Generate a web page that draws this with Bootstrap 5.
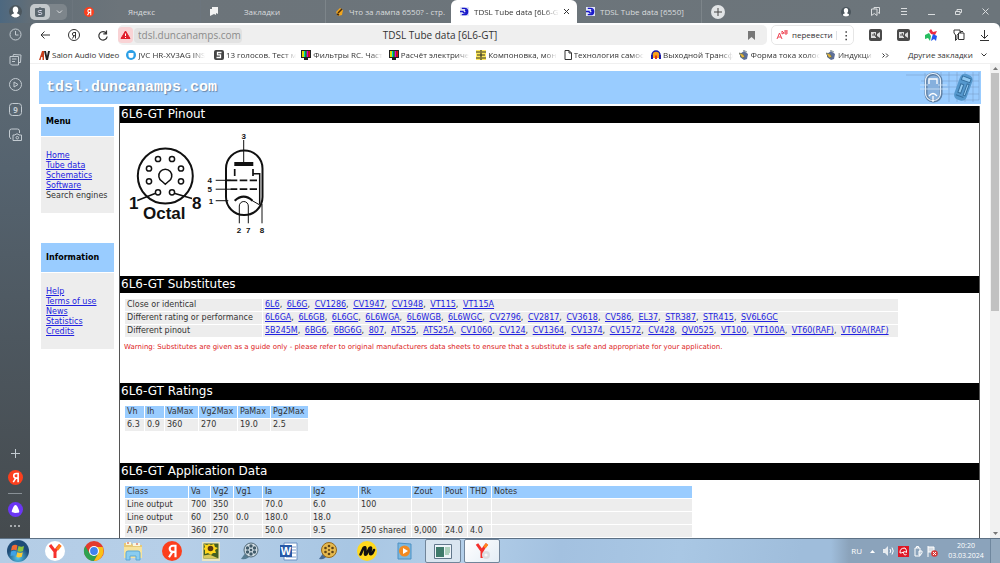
<!DOCTYPE html>
<html lang="ru">
<head>
<meta charset="utf-8">
<meta name="viewport" content="width=device-width, initial-scale=1">
<title>TDSL Tube data [6L6-GT]</title>
<link href="https://cdn.jsdelivr.net/npm/bootstrap@5.3.0/dist/css/bootstrap.min.css" rel="stylesheet">
<style>
  body { font-family: "Open Sans", "Noto Sans", sans-serif; font-size: 8px; line-height: 12px; color: #333; background: #5b656c; }
  button { border: 0; background: none; padding: 0; color: inherit; line-height: 1; }
  svg { display: block; flex: none; overflow: visible; }
  .line { fill: none; stroke: currentColor; }

  .frame { background: linear-gradient(180deg, #626d75 0, #55636f 30%, #4d575f 60%, #44494c 100%); }
  .tabstrip { height: 23px; background: linear-gradient(90deg, #4d6880 0, #626e77 3%, #6c747a 12%, #6c757b 100%); color: #d9dcde; }
  .group-chip { width: 37px; height: 16px; margin-right: 5px; border-radius: 5px; background: #7d858b; }
  .group-chip .tile { width: 20px; height: 16px; border-radius: 5px; background: #c3c8cb; }
  .btab { flex: 0 1 125px; min-width: 0; height: 23px; padding: 0 8px 0 9px; gap: 5px; border-right: 1px solid #7d858a; }
  .btab:first-child { flex-basis: 129px; padding-left: 11px; }
  .btab a { color: inherit; text-decoration: none; }
  .btab.current { flex-basis: 126px; background: #fff; color: #333; border: 0; border-radius: 6px 6px 0 0; }
  .win-tools { gap: 20px; margin-right: 11px; }
  .plus { width: 14px; height: 14px; border-radius: 7px; background: #e1e4e6; color: #444; margin-left: 9px; }
  .fade-end { white-space: nowrap; min-width: 0; -webkit-mask-image: linear-gradient(90deg, #000 82%, transparent); mask-image: linear-gradient(90deg, #000 82%, transparent); }

  .side { width: 30px; color: #c3cbd1; padding: 5px 0 6px; }
  .side .upper { gap: 12px; }
  .side .lower { gap: 8px; }
  .browser { background: #fff; border-radius: 6px 6px 0 0; }
  .toolbar { height: 24px; padding: 0 11px 0 10px; }
  .nav-tools { width: 78px; padding: 0 10px 0 0; color: #333; }
  .address { height: 20px; border-radius: 5px; background: #efefef; font-size: 10px; padding-right: 12px; }
  .page-title { padding-right: 110px; }
  .danger-box { width: 15px; height: 16px; border-radius: 4px; background: #f9d3d5; }
  .host { width: 108px; flex: none; height: 15px; border-radius: 4px; background: #e2e2e2; color: #8b8b8b; padding: 0 0 0 4px; border: 0; font-size: 10px; line-height: 15px; margin-left: 1px; }
  .translate { width: 83px; height: 20px; border: 1px solid #e6e6e6; border-radius: 5px; margin-left: 4px; }
  .ext { gap: 15px; margin-left: 15px; color: #333; }
  .bookmarks { display: grid; grid-template-columns: repeat(9, 1fr) 52px 22px 100px; height: 17px; border-bottom: 1px solid #f0f0f0; padding-left: 9px; }
  .bookmarks a { color: #333; text-decoration: none; gap: 2px; padding-right: 5px; min-width: 0; }

  .page { font-family: "DejaVu Sans", Verdana, sans-serif; color: #333; }
  .page a { color: #2222e0; }
  .viewport-pane { padding: 7px 9px 0; }
  .banner { height: 33px; background: #9cf; padding-left: 7px; font: bold 15px/33px "Liberation Mono", monospace; color: #fff; text-shadow: 1px 1px 1px #6a86a8; }
  .menu-col { width: 73px; margin: 3px 5px 0 2px; }
  .menu-head { height: 29px; padding-left: 5px; line-height: 29px; font-size: 8px; font-weight: bold; color: #000; background: #9cf; margin: 0 0 1px; }
  .menu-list { padding: 14px 0 12px 5px; line-height: 10px; background: #ededed; margin-bottom: 30px; white-space: nowrap; }
  .panel { margin: 2px 1px 0 0; border: solid #555; border-width: 0 1px; }
  .panel h2 { height: 17px; margin: 0; padding-left: 1px; background: #000; color: #fff; font-size: 12px; line-height: 17px; font-weight: normal; }
  .s-pinout { min-height: 170px; }
  .s-subs { min-height: 107px; }
  .s-ratings { min-height: 80px; }
  .grid-data { border-collapse: separate; border-spacing: 1px; margin: 5px 0 0 4px; table-layout: fixed; line-height: 12px; }
  .grid-data th, .grid-data td { height: 12px; padding: 0 0 0 2px; background: #ededed; white-space: nowrap; font-weight: normal; text-align: left; }
  .grid-data thead th { background: #9cf; }
  .grid-data a + a { margin-left: 2px; }
  .warn { color: #d22; font-size: 7px; margin: 3px 0 0 4px; }
  .scroll { width: 10px; background: #f1f1f1; color: #777; }
  .scroll svg { margin: 3px 0; }
  .thumb { width: 8px; height: 238px; background: #c1c1c1; }
  .axis text { font-family: "Liberation Sans", Arial, sans-serif; font-weight: bold; fill: #111; }

  .taskbar { height: 25px; border-top: 1px solid #5d7185; background: linear-gradient(100deg, #b4cde6 0, #b6cfe8 18%, #a8c6e3 35%, #b3cfe9 46%, #a3c1e0 56%, #a9c7e4 68%, #9fbddb 80%); }
  .start { width: 35px; }
  .task { width: 39px; height: 24px; }
  .task.open { width: 36px; border: 1px solid #71859a; border-radius: 2px; background: #d9e5f0; margin-right: 3px; }
  .task.front { background: linear-gradient(135deg, #fff, #e4edf5); }
  .tray { padding-left: 20px; background: linear-gradient(90deg, transparent, #8ba3bb 18px, #8ba3bb); color: #fff; }
  .tray-icons { gap: 4px; }
  .clock { width: 48px; font-size: 7px; line-height: 10px; text-align: center; }
  .peek { width: 10px; border-left: 1px solid #6f879e; background: #93a9be; }
</style>
</head>
<body>
<svg width="0" height="0" class="position-absolute" aria-hidden="true">
  <symbol id="ya" viewBox="0 0 16 16"><circle cx="8" cy="8" r="8" fill="#fc3f1d"/><path d="M10.800 3v10M10.800 3.800H8.600a2.400 2.400 0 0 0 0 4.900h2.200M8.300 8.700 5.600 13" fill="none" stroke="#fff" stroke-width="1.700"/></symbol>
  <symbol id="tdsl" viewBox="0 0 10 10"><rect width="10" height="10" fill="#dfe3f6"/><path d="M2 1.500h3a3.400 3.400 0 0 1 0 7H2M3.500 5a1.700 1.700 0 1 0 2-1.600M0 5h4" fill="none" stroke="#1717c9" stroke-width="1.600"/></symbol>
  <symbol id="tv" viewBox="0 0 10 10"><path d="M0 0h10v8H7v2H3V8H0z" fill="#222"/><path d="M1 1h2v6H1z" fill="#dd0"/><path d="M3 1h1.300v6H3z" fill="#0cc"/><path d="M4.300 1h1.400v6H4.300z" fill="#0b2"/><path d="M5.700 1h1.600v6H5.700z" fill="#d0c"/><path d="M7.300 1H9v6H7.300z" fill="#d11"/></symbol>
  <symbol id="rec" viewBox="0 0 13 12"><rect width="13" height="12" rx="2" fill="#4a4a4a"/><path d="M2 3h5v6H2zM8 5l3-2v6L8 7z" fill="#ddd"/><path d="M3 6h3M5 4l2 4" stroke="#444"/></symbol>
  <symbol id="chip" viewBox="0 0 10 10"><path d="M1 4l4-3 4 3-1 5-3 1-4-3z" fill="#5d6f99"/><path d="M0 3l4 1 2 3-3 1zM4 0l4 2" fill="#e4b43b" stroke="#566" stroke-width=".7"/></symbol>
  <symbol id="person" viewBox="0 0 14 14"><circle cx="7" cy="7" r="7" fill="#4b565d"/><path d="M7 1.500c2 0 3 1.400 3 3.500S9 8 8.500 8.500c0 1 3 .8 3 3-3 2.500-6 2.500-9 0 0-2.200 3-2 3-3C5 8 4 7 4 5s1-3.500 3-3.500z" fill="#fff"/></symbol>
</svg>

<div class="frame vh-100 d-flex flex-column overflow-hidden">
  <header class="tabstrip d-flex align-items-center flex-shrink-0">
    <div class="side d-flex justify-content-center py-0"><svg width="13" height="13"><use href="#person"/></svg></div>
    <button class="group-chip d-flex align-items-center" aria-label="Группа вкладок">
      <span class="tile d-flex justify-content-center align-items-center"><svg width="10" height="10" viewBox="0 0 10 10"><path d="M5 0l1.500 1H9a1 1 0 0 1 1 1v6a2 2 0 0 1-2 2H2a2 2 0 0 1-2-2V2a1 1 0 0 1 1-1h2.500z" fill="#5b676f"/><path d="M6.700 3.500H4.300a1 1 0 0 0 0 2h1.400a1 1 0 0 1 0 2H3.300" fill="none" stroke="#dde"/></svg></span>
      <svg class="ms-auto me-1" width="7" height="4" viewBox="0 0 7 4"><path class="line" d="M1 .5l2.500 2.500L6 .5"/></svg>
    </button>
    <nav class="d-flex flex-grow-1 align-items-center" aria-label="Вкладки">
      <div class="btab d-flex align-items-center border-start border-secondary"><svg width="10" height="10"><use href="#ya"/></svg><a class="flex-grow-1 text-center pe-2" href="#">Яндекс</a></div>
      <div class="btab d-flex align-items-center"><svg width="8" height="9" viewBox="0 0 8 9"><path d="M2 0h6v7l-2-1v2L4 7 0 9V2h2z" fill="#f2f2f2"/></svg><a class="flex-grow-1 text-center pe-3" href="#">Закладки</a></div>
      <div class="btab d-flex align-items-center border-0"><svg width="9" height="9" viewBox="0 0 9 9"><path d="M1 5l4-4 3 2-1 5-4 1z" fill="#f0a51f"/><path d="M3 6l4-4M2 7l2 1" stroke="#4b2b08" stroke-width="1.500"/></svg><a class="text-nowrap" href="#">Что за лампа 6550? - стр.</a></div>
      <div class="btab current d-flex align-items-center"><svg width="9" height="9"><use href="#tdsl"/></svg><a class="fade-end flex-grow-1" href="#">TDSL Tube data [6L6-GT</a><button aria-label="Закрыть"><svg width="5" height="5" viewBox="0 0 5 5"><path class="line" d="M0 0l5 5M5 0L0 5"/></svg></button></div>
      <div class="btab d-flex align-items-center"><svg width="9" height="9"><use href="#tdsl"/></svg><a class="text-nowrap" href="#">TDSL Tube data [6550]</a></div>
      <button class="plus d-flex align-items-center justify-content-center" aria-label="Новая вкладка"><svg width="8" height="8" viewBox="0 0 8 8"><path class="line" d="M4 0v8M0 4h8"/></svg></button>
    </nav>
    <div class="win-tools d-flex align-items-center">
      <svg width="10" height="10"><use href="#person"/></svg>
      <svg width="9" height="9" viewBox="0 0 9 9"><path class="line" d="M3 2V.5h5.500v6L7 5.500M.5 2H6v6.500l-2.700-2-2.800 2z"/></svg>
      <svg width="8" height="7" viewBox="0 0 8 7"><path class="line" d="M1 .5h6M1 3.500h6M1 6.500h6"/></svg>
      <button aria-label="Свернуть"><svg width="7" height="7" viewBox="0 0 7 7"><path class="line" d="M0 6.500h7"/></svg></button>
      <button aria-label="Развернуть"><svg width="7" height="6" viewBox="0 0 7 6"><path class="line" d="M2 2V.5h4.500v3H5M.5 2.500H5v3H.5z"/></svg></button>
      <button aria-label="Закрыть окно"><svg width="7" height="7" viewBox="0 0 7 7"><path class="line" d="M.5.5l6 6M6.500.5l-6 6"/></svg></button>
    </div>
  </header>

  <div class="d-flex flex-grow-1 overflow-hidden">
    <aside class="side d-flex flex-column justify-content-between flex-shrink-0">
      <div class="upper d-flex flex-column align-items-center">
        <svg width="13" height="13" viewBox="0 0 13 13"><circle class="line" cx="6.500" cy="6.500" r="5.500"/><path class="line" d="M6.500 3v4h3"/></svg>
        <svg width="13" height="13" viewBox="0 0 13 13"><path class="line" d="M4 3l.5-1.500 7.500.5-.5 7.500H10M1 3.500h8.500V12H2.500L1 10.500zM3 6h4.500M3 8.500h3"/></svg>
        <svg width="13" height="13" viewBox="0 0 13 13"><circle class="line" cx="6.500" cy="6.500" r="6"/><path class="line" d="M5 4l4 2.500L5 9z"/></svg>
        <svg width="13" height="13" viewBox="0 0 13 13"><rect class="line" x=".5" y=".5" width="12" height="12" rx="3"/><text x="6.500" y="9.500" text-anchor="middle" font-size="8" font-weight="bold" fill="currentColor">9</text></svg>
        <svg width="13" height="13" viewBox="0 0 13 13"><path class="line" d="M2 11L.5 9V3a2 2 0 0 1 2-2h6a2 2 0 0 1 2 2v2M4 7h2l1-1h2l1 1h2.500v5.500H4z"/><circle class="line" cx="8.300" cy="9.700" r="1.300"/></svg>
      </div>
      <div class="lower d-flex flex-column align-items-center">
        <svg width="9" height="9" viewBox="0 0 9 9"><path class="line" d="M4.500 0v9M0 4.500h9"/></svg>
        <svg class="mt-1" width="15" height="15"><use href="#ya"/></svg>
        <svg width="14" height="1"><path d="M0 .5h14" stroke="#899096"/></svg>
        <svg width="15" height="15" viewBox="0 0 15 15"><circle cx="7.500" cy="7.500" r="7.500" fill="#6b36f5"/><path d="M7.500 3c1 0 2 1.500 3 4 1.500 3.500 1 4-3 4s-4.500-.5-3-4c1-2.500 2-4 3-4z" fill="#fff"/></svg>
        <svg class="mb-1" width="11" height="3" viewBox="0 0 11 3"><path d="M0 0h2v2H0zM4 0h2v2H4zM8 0h2v2H8z" fill="#a7abae"/></svg>
      </div>
    </aside>

    <main class="browser d-flex flex-column flex-grow-1 overflow-hidden">
      <div class="toolbar d-flex align-items-center flex-shrink-0">
        <div class="nav-tools d-flex align-items-center justify-content-between">
          <button aria-label="Назад"><svg width="10" height="8" viewBox="0 0 10 8"><path class="line" d="M10 4H1M4.500.5L1 4l3.500 3.500"/></svg></button>
          <button aria-label="Яндекс"><svg width="12" height="12" viewBox="0 0 12 12"><circle class="line" cx="6" cy="6" r="5.500"/><path class="line" d="M7.500 3v6.500M7.500 3.500H6a1.500 1.500 0 0 0 0 3.200h1.500M6 6.700L4.500 9.500"/></svg></button>
          <button aria-label="Обновить"><svg width="10" height="11" viewBox="0 0 10 11"><path class="line" stroke-width="1.200" d="M8.500 3.500A4.200 4.200 0 1 0 9.200 6.500M8.500.5v3.300H5.300"/></svg></button>
        </div>
        <div class="address d-flex align-items-center flex-grow-1">
          <span class="danger-box d-flex align-items-center justify-content-center"><svg width="9" height="8" viewBox="0 0 9 8"><path d="M4.500 0L9 7.500H0z" fill="#e11d2b" stroke="#e11d2b" stroke-linejoin="round"/><path d="M4.500 2.500v2.500M4.500 6v1" stroke="#fff"/></svg></span>
          <input class="host" type="text" value="tdsl.duncanamps.com" aria-label="Адрес">
          <span class="page-title flex-grow-1 text-center">TDSL Tube data [6L6-GT]</span>
          <svg width="7" height="9" viewBox="0 0 7 9"><path d="M0 0h7v9L3.500 6 0 9z" fill="#777"/></svg>
        </div>
        <button class="translate d-flex align-items-center">
          <svg class="ms-1" width="12" height="10" viewBox="0 0 12 10"><path d="M1 9l2.500-6L6 9M2 7h3M6 4V1l2 2-2 1M8 1h4M8 3h4M10 0v5" fill="none" stroke="#ee4655"/></svg>
          <span class="ms-1 flex-grow-1 text-start">перевести</span>
          <svg class="border-start" width="17" height="9" viewBox="0 0 17 9"><path d="M9 0h1.500v1.500H9zM9 4h1.500v1.500H9zM9 8h1.500v1.500H9z" fill="#333"/></svg>
        </button>
        <div class="ext d-flex align-items-center">
          <svg width="13" height="12"><use href="#rec"/></svg>
          <svg width="13" height="12"><use href="#rec"/></svg>
          <svg width="13" height="12" viewBox="0 0 13 12"><path d="M6 0l2 3 4-1-2 4-4-1-2-3z" fill="#ec2940"/><path d="M0 6l4-2 2 3-1 5-2-3-3 1z" fill="#28bd60"/><path d="M8 5l4 2-1 5-2-2-3 2 1-4z" fill="#2455ee"/></svg>
          <svg width="12" height="12" viewBox="0 0 12 12"><path class="line" d="M1 1h6v3M1 1v3l1.500 2v5.500L4 10V6.500L5 5M5.500 4H11v6.500H5.500zM7.500 4V2.500H10"/></svg>
          <svg width="9" height="11" viewBox="0 0 9 11"><path class="line" d="M4.500 0v8M1 5l3.500 3.500L8 5M0 10.500h9"/></svg>
        </div>
      </div>

      <nav class="bookmarks flex-shrink-0" aria-label="Закладки">
        <a class="d-flex align-items-center" href="#"><svg width="11" height="9" viewBox="0 0 11 9"><path d="M0 9L3 0h2v9H3.500V6H2.300L1.600 9z" fill="#c8401c"/><path d="M5 0h2l1 5 1-5h2L9 9H7z" fill="#222"/></svg><span class="text-nowrap">Salon Audio Video</span></a>
        <a class="d-flex align-items-center" href="#"><svg width="10" height="10" viewBox="0 0 10 10"><circle cx="5" cy="5" r="5" fill="#2b9fe6"/><path d="M2.500 3h5v2.500a2.500 2.500 0 0 1-5 0z" fill="#fff"/></svg><span class="fade-end">JVC HR-XV3AG INS</span></a>
        <a class="d-flex align-items-center" href="#"><svg width="10" height="10" viewBox="0 0 10 10"><rect width="10" height="10" rx="2" fill="#444"/><path d="M7.500 2.500H3.500v2.300h3v2.700h-4" fill="none" stroke="#fff" stroke-width="1.300"/></svg><span class="fade-end">13 голосов. Тест м</span></a>
        <a class="d-flex align-items-center" href="#"><svg width="10" height="10"><use href="#tv"/></svg><span class="fade-end">Фильтры RC. Част</span></a>
        <a class="d-flex align-items-center" href="#"><svg width="10" height="10"><use href="#tv"/></svg><span class="fade-end">Расчёт электриче</span></a>
        <a class="d-flex align-items-center" href="#"><svg width="10" height="10" viewBox="0 0 10 10"><rect width="10" height="10" fill="#ffe95c"/><path d="M5 0v10M0 2h4M6 2h4M1 5h8M0 8h4M6 8h4" stroke="#332" stroke-width="1.200"/></svg><span class="fade-end">Компоновка, мон</span></a>
        <a class="d-flex align-items-center" href="#"><svg width="8" height="10" viewBox="0 0 8 10"><path class="line" d="M1 .5h4L7.500 3v6.500H1zM5 .5V3h2.500"/></svg><span class="fade-end">Технология самос</span></a>
        <a class="d-flex align-items-center" href="#"><svg width="10" height="10" viewBox="0 0 10 10"><path d="M1 8V5a4 4 0 0 1 8 0v3" fill="#f9a21a" stroke="#1a1aa8" stroke-width="1.500"/><path d="M0 5h2v4H0zM8 5h2v4H8z" fill="#1a1aa8"/><path d="M4 9V6l1-1 1 1v3z" fill="#e3321e"/></svg><span class="fade-end">Выходной Трансф</span></a>
        <a class="d-flex align-items-center" href="#"><svg width="10" height="10"><use href="#chip"/></svg><span class="fade-end">Форма тока холос</span></a>
        <a class="d-flex align-items-center" href="#"><svg width="10" height="10"><use href="#chip"/></svg><span class="fade-end">Индукци</span></a>
        <button class="text-start ps-1" aria-label="Ещё"><svg width="7" height="5" viewBox="0 0 7 5"><path class="line" d="M.5.5l2 2-2 2M4 .5l2 2-2 2"/></svg></button>
        <button class="d-flex align-items-center text-nowrap ps-2">Другие закладки<svg class="ms-2" width="6" height="4" viewBox="0 0 6 4"><path class="line" d="M.5.5L3 3 5.500.5"/></svg></button>
      </nav>

      <div class="page d-flex flex-grow-1 overflow-hidden">
        <div class="viewport-pane flex-grow-1 overflow-hidden">
          <div class="banner d-flex justify-content-between"><span>tdsl.duncanamps.com</span>
            <svg width="80" height="33" viewBox="0 0 80 33">
              <path d="M5 4h73M20 10h58M28 16h50M40 23h38M60 29h18M24 2v12M32 1v20M40 1v24M48 1v30M56 1v30M64 1v30M72 1v30M78 1v28" stroke="#7195bd" fill="none" stroke-width=".8" opacity=".6"/>
              <rect x="25" y="3" width="15" height="27" rx="7" fill="#86b0dd" stroke="#5d7fa4" stroke-width="3"/>
              <rect x="24.500" y="2.500" width="15" height="27" rx="7" fill="none" stroke="#e6f1fc" stroke-width="1.200"/>
              <path d="M28 13V8h8v5M28 25q4-5 8 0M32 25v6" stroke="#fff" stroke-width="1.300" fill="none"/><path d="M19 18h28M19 14h8M37 14h9" stroke="#cfe4f8" stroke-width=".8" fill="none"/>
              <g transform="rotate(20 63 16)"><rect x="56" y="3" width="13" height="27" rx="5" fill="#5598cd"/><path d="M58 6h9v4h-9zM59 14h3v9h-3zM65 12h2v12h-2zM58 26h8" fill="#8fc9f2" stroke="#356f9f"/></g>
            </svg>
          </div>
          <div class="d-flex">
            <nav class="menu-col flex-shrink-0">
              <h3 class="menu-head">Menu</h3>
              <div class="menu-list"><a href="#">Home</a><br><a href="#">Tube data</a><br><a href="#">Schematics</a><br><a href="#">Software</a><br>Search engines</div>
              <h3 class="menu-head">Information</h3>
              <div class="menu-list"><a href="#">Help</a><br><a href="#">Terms of use</a><br><a href="#">News</a><br><a href="#">Statistics</a><br><a href="#">Credits</a></div>
            </nav>
            <div class="panel flex-grow-1">
              <section class="s-pinout">
                <h2>6L6-GT Pinout</h2>
                <svg class="axis" width="160" height="120" viewBox="120 123 160 120" role="img" aria-label="Octal base and valve symbol">
                  <g fill="none" stroke="#111">
                    <g stroke-width="2"><circle cx="165.300" cy="176" r="27.500"/>
                    <rect x="226" y="150.500" width="36.500" height="64.500" rx="18"/></g>
                    <g stroke-width="1.500"><circle cx="158" cy="159" r="2.600"/><circle cx="172" cy="159" r="2.600"/><circle cx="149" cy="168.500" r="2.600"/><circle cx="181" cy="168.500" r="2.600"/><circle cx="149" cy="181.300" r="2.600"/><circle cx="181" cy="181.300" r="2.600"/><circle cx="158" cy="192.300" r="2.600"/><circle cx="172" cy="192.300" r="2.600"/>
                    <path d="M162 181.300a6.500 6.500 0 1 1 6.600 0l-3.300 3z"/>
                    <path d="M137.300 200.500L155 193.500M175 193.500L192 198.500"/></g>
                    <path d="M243.700 140v23M215.700 180.300H231M215.700 189.200H231M215.700 200.700h12.600M239.300 223.300V206a4.500 4.500 0 0 1 9 0v17.300M262 204v19.300"/>
                    <path d="M253 173.700h6.700V204" stroke-width="1.500"/>
                    <path d="M234.700 169v7M253 169v7M226 180.300h11.300M239.700 180.300h7.600M249.700 180.300h7.300M230.700 189.200h6.600M239.700 189.200h7.600M249.700 189.200h7.300" stroke-width="1.700"/>
                    <path d="M234.700 200.700Q243.700 192.500 252.500 200.700" stroke-width="2.200"/><path d="M252 200.500l9.500 5.500"/>
                    <path d="M234.300 164h19" stroke-width="4"/>
                  </g>
                  <g font-size="17"><text x="129" y="209">1</text><text x="192" y="208.500">8</text><text x="143" y="218.500">Octal</text></g>
                  <g font-size="8" text-anchor="middle"><text x="243.700" y="139">3</text><text x="209.700" y="183">4</text><text x="209.700" y="192">5</text><text x="211" y="203.500">1</text><text x="239" y="233">2</text><text x="248.300" y="233">7</text><text x="262" y="233">8</text></g>
                </svg>
              </section>
              <section class="s-subs">
                <h2>6L6-GT Substitutes</h2>
                <table class="grid-data">
                  <colgroup><col style="width:137px"><col style="width:635px"></colgroup>
                  <tbody>
                  <tr><th scope="row">Close or identical</th><td><a href="#">6L6</a>, <a href="#">6L6G</a>, <a href="#">CV1286</a>, <a href="#">CV1947</a>, <a href="#">CV1948</a>, <a href="#">VT115</a>, <a href="#">VT115A</a></td></tr>
                  <tr><th scope="row">Different rating or performance</th><td><a href="#">6L6GA</a>, <a href="#">6L6GB</a>, <a href="#">6L6GC</a>, <a href="#">6L6WGA</a>, <a href="#">6L6WGB</a>, <a href="#">6L6WGC</a>, <a href="#">CV2796</a>, <a href="#">CV2817</a>, <a href="#">CV3618</a>, <a href="#">CV586</a>, <a href="#">EL37</a>, <a href="#">STR387</a>, <a href="#">STR415</a>, <a href="#">SV6L6GC</a></td></tr>
                  <tr><th scope="row">Different pinout</th><td><a href="#">5B245M</a>, <a href="#">6BG6</a>, <a href="#">6BG6G</a>, <a href="#">807</a>, <a href="#">ATS25</a>, <a href="#">ATS25A</a>, <a href="#">CV1060</a>, <a href="#">CV124</a>, <a href="#">CV1364</a>, <a href="#">CV1374</a>, <a href="#">CV1572</a>, <a href="#">CV428</a>, <a href="#">QV0525</a>, <a href="#">VT100</a>, <a href="#">VT100A</a>, <a href="#">VT60(RAF)</a>, <a href="#">VT60A(RAF)</a></td></tr>
                  </tbody>
                </table>
                <p class="warn">Warning: Substitutes are given as a guide only - please refer to original manufacturers data sheets to ensure that a substitute is safe and appropriate for your application.</p>
              </section>
              <section class="s-ratings">
                <h2>6L6-GT Ratings</h2>
                <table class="grid-data">
                  <colgroup><col style="width:19px"><col style="width:19px"><col style="width:33px"><col style="width:38px"><col style="width:32px"><col style="width:37px"></colgroup>
                  <thead><tr><th>Vh</th><th>Ih</th><th>VaMax</th><th>Vg2Max</th><th>PaMax</th><th>Pg2Max</th></tr></thead>
                  <tbody><tr><td>6.3</td><td>0.9</td><td>360</td><td>270</td><td>19.0</td><td>2.5</td></tr></tbody>
                </table>
              </section>
              <section>
                <h2>6L6-GT Application Data</h2>
                <table class="grid-data">
                  <colgroup><col style="width:63px"><col style="width:21px"><col style="width:22px"><col style="width:28px"><col style="width:47px"><col style="width:47px"><col style="width:52px"><col style="width:30px"><col style="width:24px"><col style="width:23px"><col style="width:200px"></colgroup>
                  <thead><tr><th>Class</th><th>Va</th><th>Vg2</th><th>Vg1</th><th>Ia</th><th>Ig2</th><th>Rk</th><th>Zout</th><th>Pout</th><th>THD</th><th>Notes</th></tr></thead>
                  <tbody>
                  <tr><td>Line output</td><td>700</td><td>350</td><td></td><td>70.0</td><td>6.0</td><td>100</td><td></td><td></td><td></td><td></td></tr>
                  <tr><td>Line output</td><td>60</td><td>250</td><td>0.0</td><td>180.0</td><td>18.0</td><td></td><td></td><td></td><td></td><td></td></tr>
                  <tr><td>A P/P</td><td>360</td><td>270</td><td></td><td>50.0</td><td>9.5</td><td>250 shared</td><td>9,000</td><td>24.0</td><td>4.0</td><td></td></tr>
                  </tbody>
                </table>
              </section>
            </div>
          </div>
        </div>
        <div class="scroll d-flex flex-column align-items-center flex-shrink-0">
          <svg width="5" height="3" viewBox="0 0 5 3"><path d="M0 3l2.500-3L5 3z" fill="currentColor"/></svg>
          <div class="thumb"></div>
          <svg class="mt-auto" width="5" height="3" viewBox="0 0 5 3"><path d="M0 0l2.500 3L5 0z" fill="currentColor"/></svg>
        </div>
      </div>
    </main>
  </div>

  <footer class="taskbar d-flex flex-shrink-0">
    <button class="start d-flex align-items-center justify-content-center" aria-label="Пуск"><svg width="22" height="22" viewBox="0 0 22 22"><defs><radialGradient id="orb" cy=".8"><stop offset="0" stop-color="#56c9ee"/><stop offset="1" stop-color="#1e4c77"/></radialGradient></defs><circle cx="11" cy="11" r="11" fill="url(#orb)"/><path d="M5 6q3-2 5.500-.5l-1 5Q7 9 4 10.500z" fill="#f06a32"/><path d="M11.500 6q3 1.500 5.500 0l-1 5q-3 1.500-5.500 0z" fill="#8cc63e"/><path d="M4 11.500Q7 10 9.300 11.500l-1 4.500Q6 15 3.500 16z" fill="#3fa2e5"/><path d="M10.300 12.300q3 1.200 5.500 0l-1 4.500q-3 1.500-5.500 0z" fill="#fcc934"/></svg></button>
    <button class="task d-flex align-items-center justify-content-center" aria-label="Яндекс Браузер"><svg width="20" height="20" viewBox="0 0 20 20"><circle cx="10" cy="10" r="10" fill="#fff"/><path d="M5 4l5 6.500M15 4q-3 3-5 6.500V17" fill="none" stroke="#f6312e" stroke-width="3"/><path d="M15.500 4L12 8.500" stroke="#ff7a1b" stroke-width="3"/></svg></button>
    <button class="task d-flex align-items-center justify-content-center" aria-label="Chrome"><svg width="20" height="20" viewBox="0 0 20 20"><circle cx="10" cy="10" r="10" fill="#e33b2e"/><path d="M1.300 5A10 10 0 0 0 10 20l4.300-7.500H5.700z" fill="#2fa24f"/><path d="M10 20a10 10 0 0 0 8.700-14H10l4.300 6.500z" fill="#fbc116"/><circle cx="10" cy="10" r="5" fill="#fff"/><circle cx="10" cy="10" r="3.900" fill="#4083ed"/></svg></button>
    <button class="task d-flex align-items-center justify-content-center" aria-label="Проводник"><svg width="20" height="20" viewBox="0 0 20 20"><path d="M1 2h7l2 2h9v13H1z" fill="#e8c977"/><path d="M3 1h5v3H3zM10 2h7v3h-7z" fill="#f7f6e3"/><path d="M1 6h18v11H1z" fill="#f6e39d"/><path d="M3 19v-7q0-2 2-2h10q2 0 2 2v7h-4v-4H7v4z" fill="#8acdf0" stroke="#5ca7d5"/><path d="M4 2h2M13 3h2" stroke="#d34a32"/></svg></button>
    <button class="task d-flex align-items-center justify-content-center" aria-label="Яндекс"><svg width="20" height="20"><use href="#ya"/></svg></button>
    <button class="task d-flex align-items-center justify-content-center" aria-label="Фото"><svg width="18" height="19" viewBox="0 0 18 19"><path d="M0 0h18v19H0z" fill="#e9e5c5"/><path d="M1.500 1.500h15v15h-15z" fill="#455f21"/><path d="M2 2l3 1 2-1 2 1 3-1 1 3 3 1-3 2 1 3-3 0-2 2-3-2-3 1V8L1.500 7 3 5z" fill="#ffd61d"/><circle cx="8.500" cy="6.500" r="2.800" fill="#5a3713"/><path d="M1.500 16.500v-3l6-1 9 4z" fill="#d9c95a"/></svg></button>
    <button class="task d-flex align-items-center justify-content-center" aria-label="Видео"><svg width="19" height="19" viewBox="0 0 19 19"><path d="M1 17q7 1 10-4l-5-3z" fill="#577c92"/><circle cx="11" cy="8" r="7" fill="#cfdbe2" stroke="#526a78"/><g fill="#415b6a"><circle cx="11" cy="8" r="1.300"/><circle cx="11" cy="4" r="1.700"/><circle cx="11" cy="12" r="1.700"/><circle cx="7.500" cy="6" r="1.700"/><circle cx="14.500" cy="6" r="1.700"/><circle cx="7.500" cy="10" r="1.700"/><circle cx="14.500" cy="10" r="1.700"/></g></svg></button>
    <button class="task d-flex align-items-center justify-content-center" aria-label="Word"><svg width="19" height="19" viewBox="0 0 19 19"><path d="M5 1h13v17H5z" fill="#fff" stroke="#6c91c4"/><path d="M13 5h4M13 8h4M13 11h4M7 15h10" stroke="#7a9ccb"/><path d="M1 3h12v12H1z" fill="#2759a7"/><text x="7" y="13" font-family="Liberation Sans" font-size="11" font-weight="bold" text-anchor="middle" fill="#fff">W</text></svg></button>
    <button class="task d-flex align-items-center justify-content-center" aria-label="Кинопроектор"><svg width="19" height="19" viewBox="0 0 19 19"><path d="M1 17q6 1 9-4l-4-3z" fill="#456a97"/><circle cx="11" cy="8" r="7.500" fill="#e6b94e" stroke="#96691a"/><g fill="#5d4318"><circle cx="11" cy="8" r="1"/><circle cx="11" cy="4" r="1.300"/><circle cx="11" cy="12" r="1.300"/><circle cx="7.500" cy="6" r="1.300"/><circle cx="14.500" cy="6" r="1.300"/><circle cx="7.500" cy="10" r="1.300"/><circle cx="14.500" cy="10" r="1.300"/></g></svg></button>
    <button class="task d-flex align-items-center justify-content-center" aria-label="Музыка"><svg width="20" height="20" viewBox="0 0 20 20"><circle cx="10" cy="10" r="10" fill="#ffd91e"/><path d="M3.500 13.500l3-6.500q2-2 2 1l-.5 5q0 1.500 1.500 0l3-6q2-1.500 1.500 1l-1 4q0 2.500 2.500 0l1.500-3" fill="none" stroke="#111" stroke-width="2.600" stroke-linecap="round" stroke-linejoin="round"/></svg></button>
    <button class="task d-flex align-items-center justify-content-center" aria-label="Проигрыватель"><svg width="17" height="18" viewBox="0 0 17 18"><path d="M1 1l13 1v15H1z" fill="#7db8df" stroke="#4d91c4"/><circle cx="7.500" cy="9" r="5.500" fill="#f38a20"/><path d="M6 6l5 3-5 3z" fill="#fff"/></svg></button>
    <button class="task open d-flex align-items-center justify-content-center" aria-label="Окно"><svg width="18" height="15" viewBox="0 0 18 15"><path d="M.5.5h17v14H.5z" fill="#eef4f9" stroke="#61778b"/><path d="M2 3h8v10H2z" fill="#3f7a6b"/><path d="M11 4h5M11 6h5M11 8h5M11 10h4" stroke="#6dac82"/></svg></button>
    <button class="task open front d-flex align-items-center justify-content-center" aria-label="Яндекс Браузер, окно"><svg width="18" height="18" viewBox="0 0 18 18"><path d="M4 2l5 7M14 2q-3 3-5 7v7" fill="none" stroke="#f4302d" stroke-width="3"/><path d="M14 2l-2.500 3.500" stroke="#ff861d" stroke-width="3"/><circle cx="13" cy="13" r="4" fill="#dcdde0"/><circle cx="13" cy="13" r="1.600" fill="#f7f7f7"/></svg></button>
    <div class="tray d-flex align-items-center ms-auto">
      <span class="me-2">RU</span>
      <div class="tray-icons d-flex align-items-center me-1">
        <svg class="me-1" width="5" height="3" viewBox="0 0 5 3"><path d="M0 3l2.500-3L5 3z" fill="#fff"/></svg>
        <svg width="11" height="10" viewBox="0 0 11 10"><path d="M0 3h2l3-3v10L2 7H0z" fill="#e6ebf0"/><path class="line" d="M7 3q1.500 2 0 4M9 1.500q2.500 3.500 0 7"/></svg>
        <svg width="11" height="11" viewBox="0 0 11 11"><path d="M0 0h11v11H0z" fill="#df1625"/><path d="M2 7q-.5-5 5-5Q9 4 8.500 6.500Q7 5 5.500 6T2 7zM5.500 6q0 4 3 2.500" fill="none" stroke="#fff"/></svg>
        <svg width="10" height="11" viewBox="0 0 10 11"><path class="line" d="M2 2h5v8H2zM3.500 2V.5h2V2M6 5h3v2L7.500 9H6z"/></svg>
        <svg width="11" height="11" viewBox="0 0 11 11"><path d="M1 0v11M1 1h6v5H1" fill="#d6dde4" stroke="#fff"/><circle cx="7.500" cy="7.500" r="3.300" fill="#d73b3b"/><path d="M6 6l3 3M9 6l-3 3" stroke="#fff"/></svg>
      </div>
      <div class="clock"><div>20:20</div><div>03.03.2024</div></div>
    </div>
    <div class="peek"></div>
  </footer>
</div>
<script src="https://cdn.jsdelivr.net/npm/bootstrap@5.3.0/dist/js/bootstrap.bundle.min.js"></script>
</body>
</html>
